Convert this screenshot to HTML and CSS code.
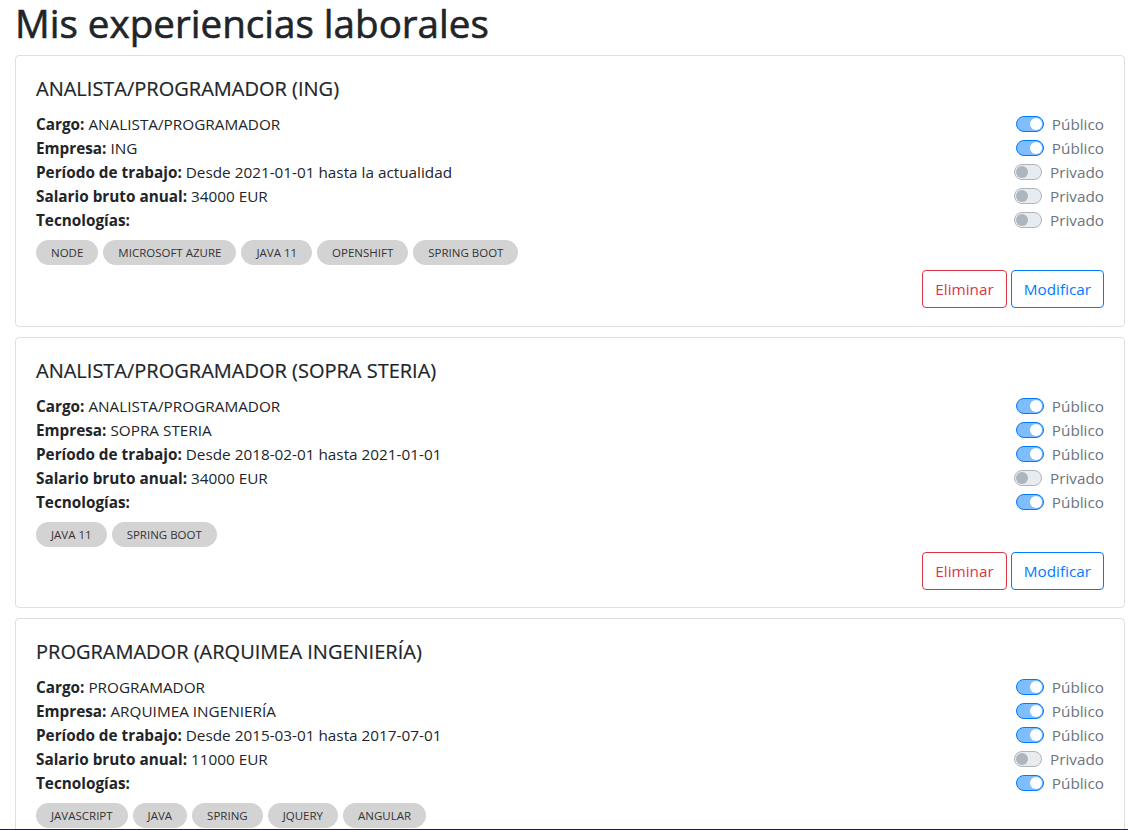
FILE: index.html
```html
<!DOCTYPE html>
<html lang="es">
<head>
<meta charset="utf-8">
<title>Mis experiencias laborales</title>
<link rel="stylesheet" href="styles.css">
</head>
<body>
<div class="page">
  <h1 class="page-title">Mis experiencias laborales</h1>

  <div class="card">
    <div class="card-body">
      <h5 class="card-title">ANALISTA/PROGRAMADOR (ING)</h5>
      <div class="row"><div class="field"><b>Cargo:</b> ANALISTA/PROGRAMADOR</div><label class="switch"><span class="track on"></span><span class="lbl">Público</span></label></div>
      <div class="row"><div class="field"><b>Empresa:</b> ING</div><label class="switch"><span class="track on"></span><span class="lbl">Público</span></label></div>
      <div class="row"><div class="field"><b>Período de trabajo:</b> Desde 2021-01-01 hasta la actualidad</div><label class="switch"><span class="track"></span><span class="lbl">Privado</span></label></div>
      <div class="row"><div class="field"><b>Salario bruto anual:</b> 34000 EUR</div><label class="switch"><span class="track"></span><span class="lbl">Privado</span></label></div>
      <div class="row"><div class="field"><b>Tecnologías:</b></div><label class="switch"><span class="track"></span><span class="lbl">Privado</span></label></div>
      <div class="badges"><span class="badge">NODE</span><span class="badge">MICROSOFT AZURE</span><span class="badge">JAVA 11</span><span class="badge">OPENSHIFT</span><span class="badge">SPRING BOOT</span></div>
      <div class="actions"><button class="btn btn-danger">Eliminar</button><button class="btn btn-primary">Modificar</button></div>
    </div>
  </div>

  <div class="card">
    <div class="card-body">
      <h5 class="card-title">ANALISTA/PROGRAMADOR (SOPRA STERIA)</h5>
      <div class="row"><div class="field"><b>Cargo:</b> ANALISTA/PROGRAMADOR</div><label class="switch"><span class="track on"></span><span class="lbl">Público</span></label></div>
      <div class="row"><div class="field"><b>Empresa:</b> SOPRA STERIA</div><label class="switch"><span class="track on"></span><span class="lbl">Público</span></label></div>
      <div class="row"><div class="field"><b>Período de trabajo:</b> Desde 2018-02-01 hasta 2021-01-01</div><label class="switch"><span class="track on"></span><span class="lbl">Público</span></label></div>
      <div class="row"><div class="field"><b>Salario bruto anual:</b> 34000 EUR</div><label class="switch"><span class="track"></span><span class="lbl">Privado</span></label></div>
      <div class="row"><div class="field"><b>Tecnologías:</b></div><label class="switch"><span class="track on"></span><span class="lbl">Público</span></label></div>
      <div class="badges"><span class="badge">JAVA 11</span><span class="badge">SPRING BOOT</span></div>
      <div class="actions"><button class="btn btn-danger">Eliminar</button><button class="btn btn-primary">Modificar</button></div>
    </div>
  </div>

  <div class="card">
    <div class="card-body">
      <h5 class="card-title">PROGRAMADOR (ARQUIMEA INGENIERÍA)</h5>
      <div class="row"><div class="field"><b>Cargo:</b> PROGRAMADOR</div><label class="switch"><span class="track on"></span><span class="lbl">Público</span></label></div>
      <div class="row"><div class="field"><b>Empresa:</b> ARQUIMEA INGENIERÍA</div><label class="switch"><span class="track on"></span><span class="lbl">Público</span></label></div>
      <div class="row"><div class="field"><b>Período de trabajo:</b> Desde 2015-03-01 hasta 2017-07-01</div><label class="switch"><span class="track on"></span><span class="lbl">Público</span></label></div>
      <div class="row"><div class="field"><b>Salario bruto anual:</b> 11000 EUR</div><label class="switch"><span class="track"></span><span class="lbl">Privado</span></label></div>
      <div class="row"><div class="field"><b>Tecnologías:</b></div><label class="switch"><span class="track on"></span><span class="lbl">Público</span></label></div>
      <div class="badges"><span class="badge">JAVASCRIPT</span><span class="badge">JAVA</span><span class="badge">SPRING</span><span class="badge">JQUERY</span><span class="badge">ANGULAR</span></div>
      <div class="actions"><button class="btn btn-danger">Eliminar</button><button class="btn btn-primary">Modificar</button></div>
    </div>
  </div>
</div>
<div class="footer-bar"></div>
</body>
</html>
```
FILE: styles.css
```css
html, body {
  margin: 0;
  padding: 0;
  background: #fff;
}
body {
  font-family: "Open Sans", "Noto Sans", "Liberation Sans", sans-serif;
  font-size: 15.3px;
  line-height: 24px;
  color: #212529;
}
.page {
  padding: 0 3px 0 15px;
}
.page-title {
  margin: -1px 0 8px 0;
  font-size: 38.6px;
  font-weight: 500;
  line-height: 48px;
  -webkit-text-stroke: 0.6px #212529;
}
.card {
  border: 1px solid rgba(0, 0, 0, 0.125);
  border-radius: 4px;
  margin-bottom: 10px;
}
.card-body {
  padding: 20px 20px 17.5px 20px;
}
.card-title {
  margin: 0 0 12px 0;
  padding-top: 1px;
  height: 23px;
  font-size: 20px;
  font-weight: 500;
  line-height: 24px;
  -webkit-text-stroke: 0.2px #212529;
}
.row {
  display: flex;
  justify-content: space-between;
  align-items: center;
  height: 24px;
}
.field b {
  font-weight: 700;
}
.switch {
  display: flex;
  align-items: center;
  gap: 8px;
}
.track {
  position: relative;
  box-sizing: border-box;
  width: 28px;
  height: 16px;
  border: 1px solid #adb5bd;
  border-radius: 8px;
  background: #e9ecef;
}
.track::after {
  content: "";
  position: absolute;
  top: 1px;
  left: 1px;
  width: 12px;
  height: 12px;
  border-radius: 50%;
  background: #adb5bd;
}
.track.on {
  border-color: #007bff;
  background: rgba(0, 123, 255, 0.5);
}
.track.on::after {
  left: 13px;
  background: #fff;
}
.lbl {
  color: #6c757d;
}
.badges {
  display: flex;
  gap: 5px;
  margin-top: 8px;
}
.badge {
  display: inline-block;
  padding: 5px 15px;
  font-size: 11.5px;
  line-height: 15px;
  border-radius: 13px;
  background: #d3d3d3;
  color: #333;
}
.actions {
  display: flex;
  justify-content: flex-end;
  gap: 4px;
  margin-top: 5px;
}
.btn {
  font-family: inherit;
  font-size: 15.3px;
  line-height: 24px;
  padding: 6px 12px;
  background: #fff;
  border: 1px solid;
  border-radius: 4px;
}
.btn-danger {
  color: #dc3545;
  border-color: #dc3545;
}
.btn-primary {
  color: #007bff;
  border-color: #007bff;
}
.footer-bar {
  position: fixed;
  left: 0;
  right: 0;
  bottom: 0;
  height: 1px;
  background: #25203f;
}
```
